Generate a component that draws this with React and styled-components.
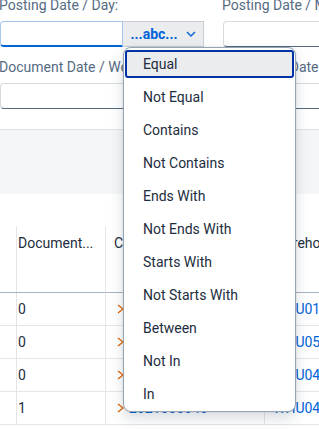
import React from "react";
import styled, { createGlobalStyle } from "styled-components";

const GlobalStyle = createGlobalStyle`
  html, body {
    margin: 0;
    padding: 0;
    background: #ffffff;
  }
  body {
    font-family: Roboto, "Liberation Sans", Arial, sans-serif;
    font-size: 14px;
    color: #1d2d3e;
  }
`;

const Page = styled.div`
  position: relative;
  width: 319px;
  height: 430px;
  overflow: hidden;
  background: #ffffff;
`;

const FilterBar = styled.div`
  padding-bottom: 20px;
  border-bottom: 1px solid #dfe3e7;
`;

const FilterGrid = styled.div`
  display: grid;
  grid-template-columns: 204px 204px;
  column-gap: 19px;
  row-gap: 12px;
  margin-top: -3px;
`;

const Field = styled.div`
  display: flex;
  flex-direction: column;
`;

const Label = styled.label`
  height: 16px;
  line-height: 16px;
  margin: 0 0 8px -1px;
  color: #556b82;
  white-space: nowrap;
`;

const Input = styled.div`
  box-sizing: border-box;
  height: 26px;
  flex: none;
  width: ${(p) => (p.$joined ? "123px" : "100%")};
  background: #ffffff;
  border: 1px solid ${(p) => (p.$focused ? "#a9c6ee" : "#d5dadf")};
  border-bottom: ${(p) => (p.$focused ? "2px solid #0064d9" : "1px solid #556b82")};
  border-radius: ${(p) => (p.$joined ? "4px 0 0 4px" : "4px")};
`;

const Combo = styled.div`
  display: flex;
  height: 26px;
`;

const OperatorButton = styled.button`
  box-sizing: border-box;
  width: 81px;
  height: 26px;
  display: flex;
  align-items: center;
  justify-content: center;
  gap: 8px;
  padding: 0 0 1px;
  background: #eaecee;
  border: 1px solid #c8ced4;
  border-left: none;
  border-radius: 0;
  color: #0064d9;
  font-family: inherit;
  font-size: 14px;
  font-weight: 700;
`;

const Toolbar = styled.div`
  height: 64px;
  background: #f5f6f7;
`;

const TableArea = styled.div`
  margin-top: 32px;
`;

const Grid = styled.div`
  display: grid;
  grid-template-columns: 10px 96px 159px 160px;
`;

const Cell = styled.div`
  box-sizing: border-box;
  height: ${(p) => (p.$head ? "67px" : "33px")};
  padding: ${(p) => (p.$head ? "9px 8px 0" : "0 8px")};
  display: flex;
  align-items: ${(p) => (p.$head ? "flex-start" : "center")};
  line-height: 16px;
  white-space: nowrap;
  overflow: hidden;
  color: #1d2d3e;
  border-right: 1px solid #e5e5e5;
  border-bottom: 1px solid ${(p) => (p.$head ? "#a8b3bd" : "#e5e5e5")};
`;

const Link = styled.span`
  color: #0064d9;
`;

const Nav = styled.svg`
  flex: none;
  margin-right: 3px;
`;

const Popover = styled.ul`
  position: absolute;
  left: 123px;
  top: 47px;
  width: 173px;
  box-sizing: border-box;
  margin: 0;
  padding: 0;
  list-style: none;
  background: #ffffff;
  border: 1px solid #97a4b2;
  border-radius: 8px;
  box-shadow: 0 0 2px rgba(34, 53, 72, 0.15), 0 6px 14px rgba(34, 53, 72, 0.18);
`;

const Option = styled.li`
  position: relative;
  height: 33px;
  line-height: 33px;
  padding-left: 19px;
  color: #1d2d3e;
  white-space: nowrap;

  &::before {
    content: "";
    display: ${(p) => (p.$selected ? "block" : "none")};
    position: absolute;
    top: 2px;
    bottom: 3px;
    left: 1px;
    right: 1px;
    background: #eaecee;
    border: 2px solid #0032a5;
    border-radius: 3px;
  }

  span {
    position: relative;
  }
`;

const operators = [
  "Equal",
  "Not Equal",
  "Contains",
  "Not Contains",
  "Ends With",
  "Not Ends With",
  "Starts With",
  "Not Starts With",
  "Between",
  "Not In",
  "In",
];

const rows = [
  { count: "0", doc: "2021000037", wh: "WHU01" },
  { count: "0", doc: "2021000038", wh: "WHU05" },
  { count: "0", doc: "2021000039", wh: "WHU04" },
  { count: "1", doc: "2021000040", wh: "WHU04" },
];

const ChevronDown = () => (
  <svg width="10" height="6" viewBox="0 0 10 6">
    <path d="M1 1 L5 5 L9 1" fill="none" stroke="#0064d9" strokeWidth="1.4" />
  </svg>
);

const ChevronRight = () => (
  <Nav width="12" height="12" viewBox="0 0 12 12">
    <path d="M4 2 L9 6 L4 10" fill="none" stroke="#e76500" strokeWidth="1.3" />
  </Nav>
);

export default function App() {
  return (
    <Page>
      <GlobalStyle />
      <FilterBar>
        <FilterGrid>
          <Field>
            <Label>Posting Date / Day:</Label>
            <Combo>
              <Input $focused $joined />
              <OperatorButton>
                ...abc...
                <ChevronDown />
              </OperatorButton>
            </Combo>
          </Field>
          <Field>
            <Label>Posting Date / Month:</Label>
            <Input />
          </Field>
          <Field>
            <Label>Document Date / Week:</Label>
            <Input />
          </Field>
          <Field>
            <Label>Document Date / Month:</Label>
            <Input />
          </Field>
        </FilterGrid>
      </FilterBar>
      <Toolbar />
      <TableArea>
        <Grid>
          <Cell $head />
          <Cell $head>Document...</Cell>
          <Cell $head>Cost Center</Cell>
          <Cell $head>Warehouse</Cell>
          {rows.map((r) => (
            <React.Fragment key={r.doc}>
              <Cell />
              <Cell>{r.count}</Cell>
              <Cell>
                <ChevronRight />
                <Link>{r.doc}</Link>
              </Cell>
              <Cell>
                <Link>{r.wh}</Link>
              </Cell>
            </React.Fragment>
          ))}
        </Grid>
      </TableArea>
      <Popover>
        {operators.map((op, i) => (
          <Option key={op} $selected={i === 0}>
            <span>{op}</span>
          </Option>
        ))}
      </Popover>
    </Page>
  );
}
